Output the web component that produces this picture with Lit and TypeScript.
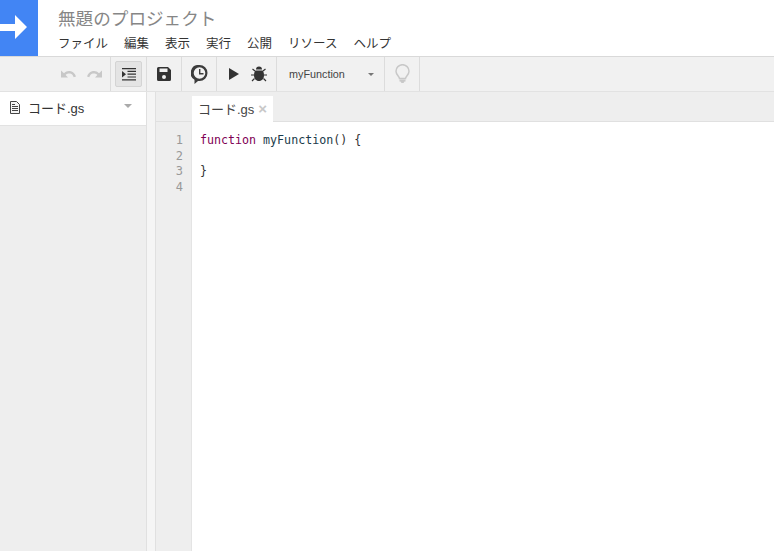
import { LitElement, html, css } from "lit";
import { customElement } from "lit/decorators.js";

@customElement("app-root")
export class AppRoot extends LitElement {
  static styles = css`
    :host { display: flex; flex-direction: column; width: 774px; height: 551px; overflow: hidden; background: #fff;
      font-family: "Liberation Sans", "Noto Sans CJK JP", sans-serif; color: #333; }
    .header { display: flex; height: 56px; flex: none; }
    .logo { width: 38px; height: 56px; background: #4285f4; display: flex; align-items: center; }
    .titles { padding-left: 20px; display: flex; flex-direction: column; }
    .title { font-size: 17.6px; line-height: 24px; margin-top: 6px; color: #868686; font-family: "Noto Sans CJK JP", sans-serif; font-weight: 400; white-space: nowrap; }
    .menu { display: flex; gap: 16px; font-size: 12.5px; line-height: 18px; margin-top: 4px; color: #333; font-family: "Noto Sans CJK JP", sans-serif; white-space: nowrap; }
    .toolbar { display: flex; height: 36px; flex: none; background: #f1f1f1; border-top: 1px solid #d9d9d9; border-bottom: 1px solid #e2e2e2; box-sizing: border-box; }
    .group { display: flex; align-items: center; border-right: 1px solid #dcdcdc; box-sizing: border-box; flex: none; }
    .g0 { width: 111px; padding-left: 60px; gap: 9px; }
    .g1 { width: 36px; padding-left: 4px; }
    .g2 { width: 35px; justify-content: center; }
    .g3 { width: 35px; justify-content: center; }
    .g4 { width: 60px; padding-left: 12px; gap: 12px; }
    .g5 { width: 108px; padding-left: 12px; justify-content: space-between; padding-right: 10px; font-size: 10.8px; color: #444; }
    .g6 { width: 35px; justify-content: center; }
    .indent { width: 27px; height: 26px; background: #e4e4e4; border: 1px solid #d4d4d4; border-radius: 2px; display: flex; align-items: center; justify-content: center; box-sizing: border-box; }
    svg { display: block; flex: none; }
    .caret { width: 0; height: 0; border: 3px solid transparent; border-top: 3px solid #777; border-bottom: 0; }
    .main { flex: 1; display: flex; min-height: 0; }
    .side { width: 146px; flex: none; background: #eee; border-right: 1px solid #e0e0e0; display: flex; flex-direction: column; }
    .file { height: 31px; background: #fff; border-bottom: 1px solid #e2e2e2; display: flex; align-items: center; padding: 0 14px 2px 10px; box-sizing: content-box; font-size: 13px; color: #333; }
    .file .name { margin-left: 8px; flex: 1; }
    .file .caret { border-width: 4px; border-top-width: 4px; border-bottom: 0; border-top-color: #aaa; margin-bottom: 3px; }
    .gap { width: 8px; flex: none; background: #f5f5f5; }
    .work { flex: 1; display: grid; grid-template-columns: 37px 1fr; grid-template-rows: 30px 1fr; min-width: 0; }
    .tabcorner { background: #eee; border-bottom: 1px solid #e0e0e0; border-left: 1px solid #e0e0e0; }
    .tabs { background: #eee; border-bottom: 1px solid #e0e0e0; display: flex; align-items: flex-end; padding-top: 4px; box-sizing: border-box; }
    .tab { width: 81px; height: 26px; background: #fff; margin-bottom: -1px; display: flex; align-items: center; padding: 0 0 2px 6px; box-sizing: border-box; font-size: 13px; color: #444; }
    .close { margin-left: 4px; color: #c8c8c8; font-size: 15px; line-height: 15px; font-weight: 700; }
    .gutter { background: #eee; border-left: 1px solid #e0e0e0; border-right: 1px solid #e4e4e4; padding: 11px 8px 0 0; font: 12px/15.5px "DejaVu Sans Mono", monospace; color: #999; text-align: right; box-sizing: border-box; }
    .code { padding: 11px 0 0 8px; font: 11.65px/15.5px "DejaVu Sans Mono", monospace; color: #333; white-space: pre; }
    .kw { color: #7f0055; }
    .fn { color: #1a3a4a; }
  `;

  render() {
    return html`
      <div class="header">
        <div class="logo">
          <svg width="38" height="56" viewBox="0 0 38 56"><path d="M0 24h15v-9l12 12-12 12v-8H0z" fill="#fff"/></svg>
        </div>
        <div class="titles">
          <div class="title">無題のプロジェクト</div>
          <div class="menu">
            <span>ファイル</span><span>編集</span><span>表示</span><span>実行</span><span>公開</span><span>リソース</span><span>ヘルプ</span>
          </div>
        </div>
      </div>
      <div class="toolbar">
        <div class="group g0">
          <svg width="17" height="10" viewBox="0 0 17 10"><path d="M4 4.200C6 2 8.500 1.500 11 2.200c2.500.8 4.200 2.800 5 5.300l-2.300.8c-.6-1.900-1.700-3.100-3.400-3.700-1.900-.5-3.500 0-4.700 1.300L8 8.500H1V1.500z" fill="#c8c8c8"/></svg>
          <svg width="17" height="10" viewBox="0 0 17 10"><path d="M13 4.200C11 2 8.500 1.500 6 2.200 3.500 3 1.800 5 1 7.500l2.300.8c.6-1.900 1.700-3.100 3.400-3.700 1.900-.5 3.500 0 4.700 1.300L9 8.500h7V1.500z" fill="#c8c8c8"/></svg>
        </div>
        <div class="group g1">
          <div class="indent">
            <svg width="14" height="13" viewBox="0 0 14 13"><path d="M0 0h14v1.200H0zM5.500 2.800H14V4H5.500zM5.500 5.600H14v1.200H5.500zM5.500 8.400H14v1.200H5.500zM0 11.200h14v1.200H0zM0 3l4 3.200-4 3.200z" fill="#333"/></svg>
          </div>
        </div>
        <div class="group g2">
          <svg width="14" height="14" viewBox="0 0 14 14"><path fill-rule="evenodd" d="M0 1.500A1.500 1.500 0 0 1 1.500 0H11l3 3v9.500a1.500 1.500 0 0 1-1.500 1.500h-11A1.500 1.500 0 0 1 0 12.500zM2.500 1.500V5h8V1.500zM7 8a2 2 0 1 0 0 4 2 2 0 0 0 0-4z" fill="#333"/></svg>
        </div>
        <div class="group g3">
          <svg width="17" height="19" viewBox="0 0 17 19"><path fill-rule="evenodd" d="M8.500 0a8 8 0 0 1 0 16H7L3.500 19v-4.200A8 8 0 0 1 8.500 0zm0 2.200a5.800 5.800 0 1 0 0 11.600 5.800 5.800 0 0 0 0-11.600z" fill="#3c3c3c"/><path d="M8 4h1.400v4H12.500v1.400H8z" fill="#3c3c3c"/></svg>
        </div>
        <div class="group g4">
          <svg width="10" height="12" viewBox="0 0 10 12"><path d="M0 0l10 6-10 6z" fill="#333"/></svg>
          <svg width="16" height="16" viewBox="0 0 16 16"><path d="M5 3.500a3 3 0 0 1 6 0zM4.500 4.500h7c1 1 1.500 2.500 1.500 5 0 3-2 5.500-5 5.500s-5-2.500-5-5.500c0-2.500.5-4 1.500-5z" fill="#333"/><path d="M4 5L1.500 3M12 5l2.500-2M3 9H0M13 9h3M3.500 12.500L1 15M12.500 12.500L15 15" stroke="#333" stroke-width="1.200" fill="none"/></svg>
        </div>
        <div class="group g5"><span>myFunction</span><span class="caret"></span></div>
        <div class="group g6">
          <svg width="15" height="20" viewBox="0 0 15 20"><path d="M4.500 14.500c0-2-3.500-3.500-3.500-7.300a6.500 6.500 0 0 1 13 0c0 3.800-3.500 5.300-3.500 7.300z" fill="none" stroke="#c8c8c8" stroke-width="1.500"/><path d="M4.500 15.500h6v2h-1l-1 1.500h-2l-1-1.500h-1z" fill="#c8c8c8"/></svg>
        </div>
      </div>
      <div class="main">
        <div class="side">
          <div class="file">
            <svg width="10" height="13" viewBox="0 0 10 13"><path d="M.5.500h6l3 3v9h-9z" fill="#f4f4f4" stroke="#444"/><path d="M2 5.500h6M2 7.500h6M2 9.500h6M2 3.500h3" stroke="#444"/></svg>
            <span class="name">コード.gs</span><span class="caret"></span>
          </div>
        </div>
        <div class="gap"></div>
        <div class="work">
          <div class="tabcorner"></div>
          <div class="tabs"><div class="tab">コード.gs<span class="close">×</span></div></div>
          <div class="gutter">1<br>2<br>3<br>4</div>
          <div class="code"><span class="kw">function</span> <span class="fn">myFunction</span>() {

}</div>
        </div>
      </div>
    `;
  }
}
